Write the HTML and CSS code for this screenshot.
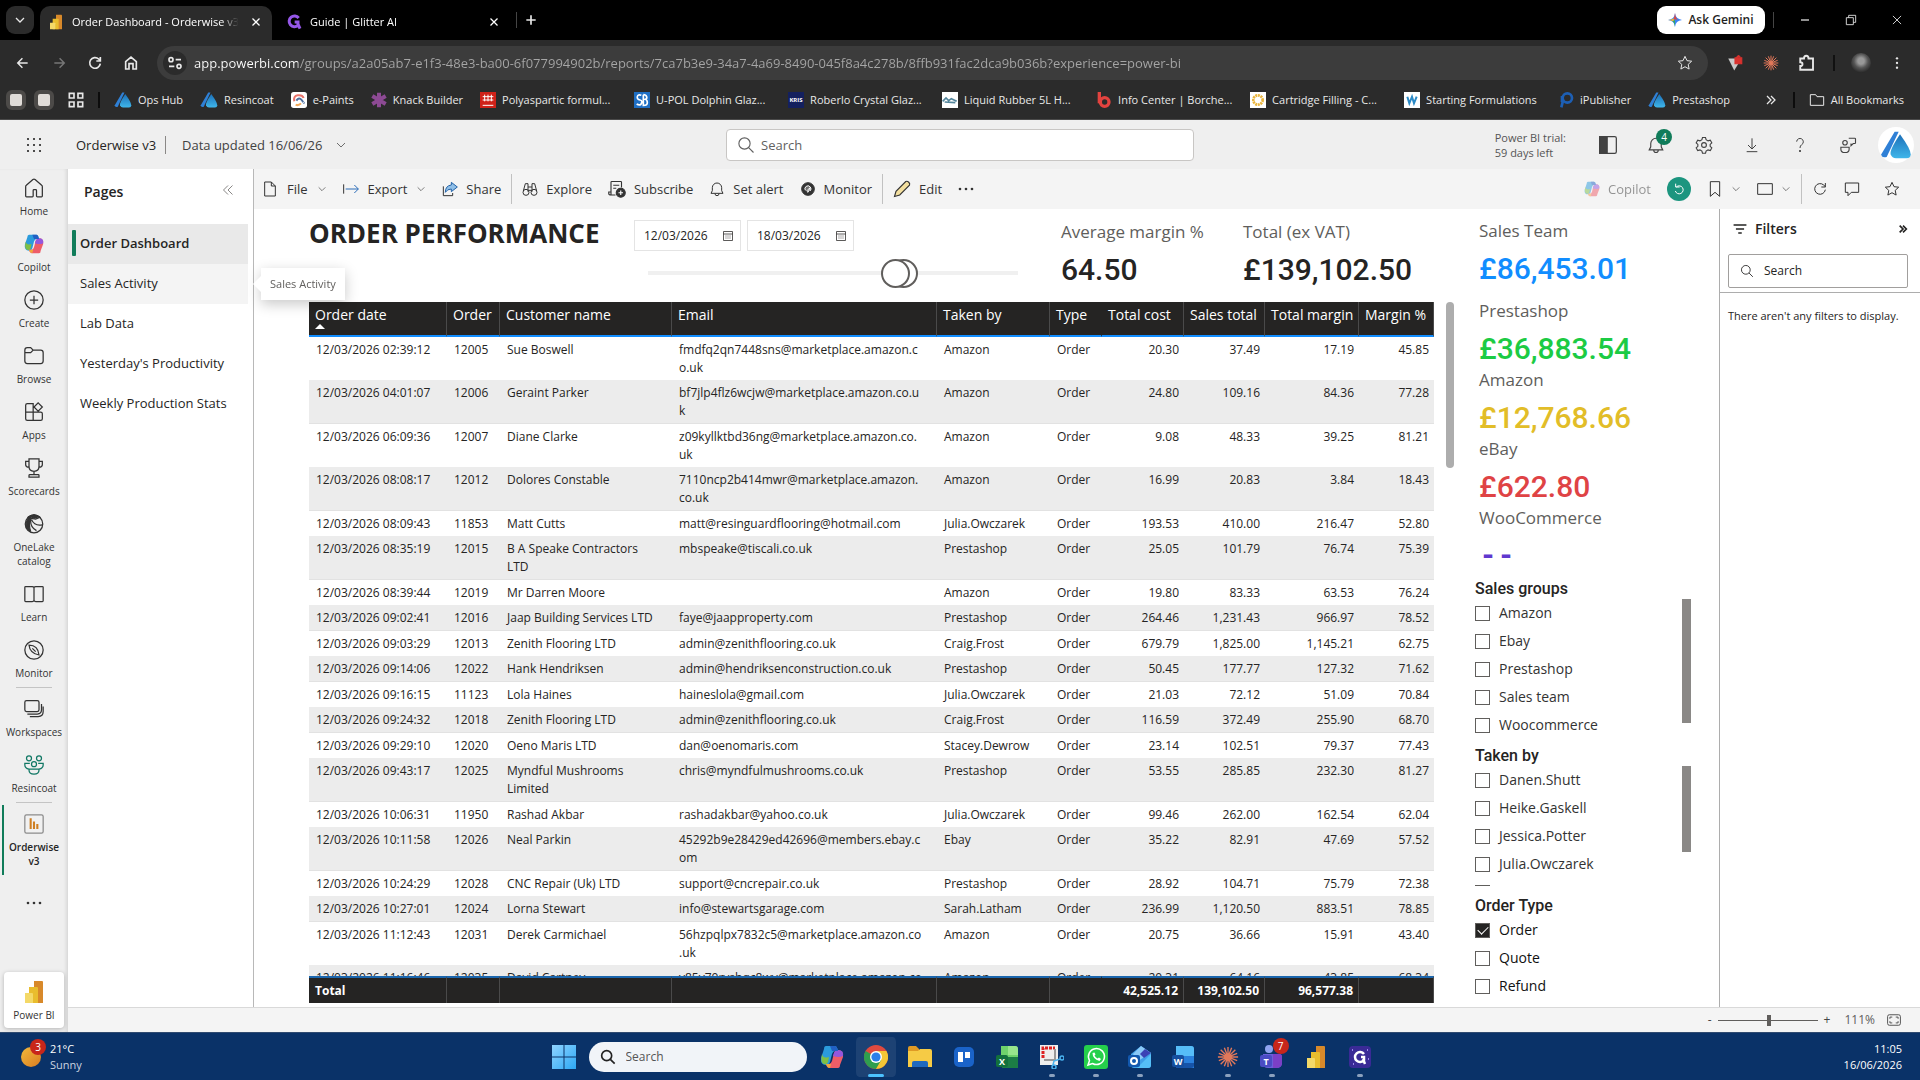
FILE: index.html
```html
<!DOCTYPE html>
<html lang="en">
<head>
<meta charset="utf-8">
<title>Order Dashboard - Orderwise v3 - Power BI</title>
<link rel="stylesheet" href="styles.css">
</head>
<body>
<svg class="sprite" aria-hidden="true">
<defs>
<linearGradient id="gDrop" x1="0" y1="0" x2="0" y2="1"><stop offset="0" stop-color="#1b6fb8"/><stop offset="1" stop-color="#3fb6ea"/></linearGradient>
<linearGradient id="gWin" x1="0" y1="0" x2="1" y2="1"><stop offset="0" stop-color="#8fd3ff"/><stop offset="1" stop-color="#2ca8f5"/></linearGradient>
<linearGradient id="gSun" x1="0" y1="0" x2="1" y2="1"><stop offset="0" stop-color="#f2b93b"/><stop offset="1" stop-color="#d97c22"/></linearGradient>
</defs>
<symbol id="chev" viewBox="0 0 24 24"><path d="M4 8l8 8 8-8"/></symbol>
<symbol id="x" viewBox="0 0 24 24"><path d="M5 5l14 14M19 5L5 19"/></symbol>
<symbol id="plus" viewBox="0 0 24 24"><path d="M12 5v14M5 12h14"/></symbol>
<symbol id="minus" viewBox="0 0 24 24"><path d="M4 12h16"/></symbol>
<symbol id="restore" viewBox="0 0 24 24"><path d="M4 8h12v12H4zM8 8V4h12v12h-4"/></symbol>
<symbol id="back" viewBox="0 0 24 24"><path d="M20 12H4M11 4l-8 8 8 8"/></symbol>
<symbol id="fwd" viewBox="0 0 24 24"><path d="M4 12h16M13 4l8 8-8 8"/></symbol>
<symbol id="reload" viewBox="0 0 24 24"><path d="M20 13a8 8 0 1 1-2.500-7l2.500 2.500M20 3v6h-6"/></symbol>
<symbol id="house" viewBox="0 0 24 24"><path d="M4 21V10l8-7 8 7v11h-5v-8H9v8z"/></symbol>
<symbol id="home" viewBox="0 0 24 24"><path d="M2 10.500a2 2 0 0 1 .8-1.700l7.900-7a2 2 0 0 1 2.600 0l7.900 7a2 2 0 0 1 .8 1.700V21.500a1 1 0 0 1-1 1h-5a1 1 0 0 1-1-1V15a1 1 0 0 0-1-1h-2a1 1 0 0 0-1 1v6.500a1 1 0 0 1-1 1H3a1 1 0 0 1-1-1z"/></symbol>
<symbol id="tune" viewBox="0 0 24 24"><circle cx="6" cy="7" r="3"/><path d="M13 7h8M3 17h8"/><circle cx="18" cy="17" r="3"/></symbol>
<symbol id="star" viewBox="0 0 24 24"><path d="M12 2l3 6.500 7 .8-5.200 4.800 1.400 7-6.200-3.500-6.200 3.500 1.400-7L2 9.300l7-.8z"/></symbol>
<symbol id="puzzle" viewBox="0 0 24 24"><path d="M3 6h5c0-5 6-5 6 0h6v5c0 2 0 4 0 5v5H3v-5c4 0 4-5 0-5z"/></symbol>
<symbol id="kebab" viewBox="0 0 24 24"><g fill="currentColor" stroke="none"><circle cx="12" cy="4" r="2"/><circle cx="12" cy="12" r="2"/><circle cx="12" cy="20" r="2"/></g></symbol>
<symbol id="dots" viewBox="0 0 24 24"><g fill="currentColor" stroke="none"><circle cx="3" cy="12" r="2"/><circle cx="12" cy="12" r="2"/><circle cx="21" cy="12" r="2"/></g></symbol>
<symbol id="burst" viewBox="0 0 24 24"><path d="M12 1v22M1 12h22M4 4l16 16M20 4L4 20M8 2l8 20M2 8l20 8M16 2L8 22M22 8L2 16" stroke="#e2785a" stroke-width="1.500"/></symbol>
<symbol id="asterisk" viewBox="0 0 24 24"><path d="M12 1v22M2 6l20 12M22 6L2 18" stroke="#8d4a94" stroke-width="6"/></symbol>
<symbol id="grid4" viewBox="0 0 24 24"><path d="M2 2h7v7H2zM15 2h7v7h-7zM2 15h7v7H2zM15 15h7v7h-7z"/></symbol>
<symbol id="folder" viewBox="0 0 24 24"><path d="M2 4h8l2 3h10v13H2z"/></symbol>
<symbol id="dbl" viewBox="0 0 24 24"><path d="M4 4l8 8-8 8M12 4l8 8-8 8"/></symbol>
<symbol id="dbll" viewBox="0 0 24 24"><path d="M12 3l-9 9 9 9M21 3l-9 9 9 9"/></symbol>
<symbol id="drop" viewBox="0 0 24 24"><path d="M1 19L11 2h3L5 21q-4 1-4-2z" fill="#2f80d6" stroke="none"/><path d="M15 4q-8 12-7 15 1 3 4 3h8q3 0 3-3 0-4-8-15z" fill="url(#gDrop)" stroke="none"/></symbol>
<symbol id="pbi" viewBox="0 0 24 24"><g stroke="none"><path d="M12 1h8q1 0 1 1v21h-9z" fill="#d8892a"/><path d="M7 7h8q1 0 1 1v15H7z" fill="#e9bd2e"/><path d="M3 13h7q1 0 1 1v9H3z" fill="#f4d968"/></g></symbol>
<symbol id="glitter" viewBox="0 0 24 24"><path d="M19 6a8 8 0 1 0-1 11l0-5h-5M18 15l3 7" stroke="#9557e8" stroke-width="4.500"/></symbol>
<symbol id="gem" viewBox="0 0 24 24"><g stroke="none"><path d="M12 0q1 10 12 12-11 1-12 12Q11 13 0 12 11 11 12 0z" fill="#3b82f6"/><path d="M12 0q1 10 5 11l-8 0Q11 9 12 0z" fill="#e2483d"/><path d="M0 12q8-1 10-3v6q-2-2-10-3z" fill="#f0b92d"/><path d="M12 24Q11 16 8 14l4-2z" fill="#2fa866"/></g></symbol>
<symbol id="epaints" viewBox="0 0 24 24"><rect width="24" height="24" rx="4" fill="#fff" stroke="none"/><path d="M5 14q-2-8 5-9t9 4" stroke="#e9736a" stroke-width="3"/><path d="M8 13q4-6 8-1t3 4" stroke="#4d6f9e" stroke-width="3"/><path d="M7 19q4 2 8-2" stroke="#f1a95a" stroke-width="3"/></symbol>
<symbol id="poly" viewBox="0 0 24 24"><path d="M0 0h24v24H0z" fill="#cf2219" stroke="none"/><path d="M7 4v10M12 4v10M17 4v10M4 7h16M4 12h16M4 20h16" stroke="#fff" stroke-width="1.500"/></symbol>
<symbol id="upol" viewBox="0 0 24 24"><path d="M0 0h24v24H0z" fill="#1f6fc4" stroke="none"/><path d="M11 5q-5-2-6 2t4 5 1 7q-3 1-6-1M14 4v16q6 0 6-4t-3-5q3-1 2-4t-5-3" stroke="#fff" stroke-width="2.500"/></symbol>
<symbol id="liquid" viewBox="0 0 24 24"><path d="M0 0h24v24H0z" fill="#fff" stroke="none"/><path d="M1 14l5-5 4 4 4-3 8 4M4 15l16 1" stroke="#54869c" stroke-width="2.500"/></symbol>
<symbol id="borch" viewBox="0 0 24 24"><path d="M5 0v17" stroke="#e2433f" stroke-width="5"/><circle cx="13" cy="15" r="6.500" stroke="#e2433f" stroke-width="5"/></symbol>
<symbol id="cart" viewBox="0 0 24 24"><path d="M0 0h24v24H0z" fill="#fff" stroke="none"/><circle cx="12" cy="12" r="7" stroke="#eab53c" stroke-width="4" stroke-dasharray="3 1"/></symbol>
<symbol id="wsq" viewBox="0 0 24 24"><path d="M0 0h24v24H0z" fill="#fff" stroke="none"/><path d="M5 7l3 10 4-10 3 10 4-10" stroke="#2b8ac6" stroke-width="3"/></symbol>
<symbol id="ipub" viewBox="0 0 24 24"><circle cx="14" cy="9" r="7" stroke="#1d5fb4" stroke-width="4"/><path d="M8 11l-3 12M6 6v9" stroke="#1d5fb4" stroke-width="4"/></symbol>
<symbol id="waffle" viewBox="0 0 24 24"><g fill="currentColor" stroke="none"><circle cx="3" cy="3" r="1.600"/><circle cx="12" cy="3" r="1.600"/><circle cx="21" cy="3" r="1.600"/><circle cx="3" cy="12" r="1.600"/><circle cx="12" cy="12" r="1.600"/><circle cx="21" cy="12" r="1.600"/><circle cx="3" cy="21" r="1.600"/><circle cx="12" cy="21" r="1.600"/><circle cx="21" cy="21" r="1.600"/></g></symbol>
<symbol id="mag" viewBox="0 0 24 24"><circle cx="10" cy="10" r="7.500"/><path d="M15.500 15.500L22 22"/></symbol>
<symbol id="panel" viewBox="0 0 24 24"><rect x="2" y="2" width="20" height="20" rx="2"/><path d="M2 2h9v20H2z" fill="currentColor"/></symbol>
<symbol id="bell" viewBox="0 0 24 24"><path d="M3 18.500l2-4V10a7 7 0 0 1 14 0v4.500l2 4zM9 19a3 3 0 0 0 6 0"/></symbol>
<symbol id="gear" viewBox="0 0 24 24"><circle cx="12" cy="12" r="3.200"/><path d="M10 2h4l.8 3 2.600 1.500 3-.9 2 3.500-2.200 2.100v2.600l2.200 2.100-2 3.500-3-.9-2.600 1.500-.8 3h-4l-.8-3-2.600-1.500-3 .9-2-3.500 2.200-2.100v-2.600L1.600 9.100l2-3.500 3 .9L9.200 5z"/></symbol>
<symbol id="down" viewBox="0 0 24 24"><path d="M12 2v16M6 12l6 6 6-6M4 22h16"/></symbol>
<symbol id="help" viewBox="0 0 24 24"><path d="M7 7a5 5 0 1 1 7.500 4.500Q12 13 12 16.500"/><circle cx="12" cy="21" r="1" fill="currentColor"/></symbol>
<symbol id="feedback" viewBox="0 0 24 24"><circle cx="8" cy="9" r="3"/><path d="M2.500 15h11v2.500q0 4.500-5.500 4.500t-5.500-4.500zM13 3h8q1 0 1 1v5q0 1-1 1h-2l-3 3v-3"/></symbol>
<symbol id="file" viewBox="0 0 24 24"><path d="M4 1.500h10l6 6v15H4zM14 1.500v6h6"/></symbol>
<symbol id="export" viewBox="0 0 24 24"><path d="M1 5v14"/><path d="M4 12h19M17 6l6 6-6 6" stroke="#2b6cb8"/></symbol>
<symbol id="share" viewBox="0 0 24 24"><path d="M2 8v14h14v-4"/><path d="M14 2l9 7-9 7v-4q-6 0-9 5 0-10 9-11z" fill="#8fbfe8" stroke="#2463a8"/></symbol>
<symbol id="binoc" viewBox="0 0 24 24"><circle cx="6" cy="17" r="4.500"/><circle cx="18" cy="17" r="4.500"/><path d="M2 15L5 4h4v12M22 15L19 4h-4v12M9 9h6M10 14h4"/></symbol>
<symbol id="subs" viewBox="0 0 24 24"><path d="M10 20H4V3q0-1 1-1h12q1 0 1 1v7M7 7h8M7 11h4M4 16H1v2q0 2 3 2"/><circle cx="17" cy="17" r="6" fill="currentColor"/><path d="M17 14v6M14 17h6" stroke="#fff"/></symbol>
<symbol id="gauge" viewBox="0 0 24 24"><circle cx="12" cy="12" r="9.500" fill="currentColor"/><path d="M8 14a4.500 4.500 0 1 1 7 1M12 17l3-7-5 5z" stroke="#fff" fill="#fff" fill-opacity=".3"/></symbol>
<symbol id="pencil" viewBox="0 0 24 24"><path d="M2 22l2-7L17 2q2-1 4 1t1 4L9 20z" fill="#f3df9f"/></symbol>
<symbol id="copilot" viewBox="0 0 24 24"><g stroke="none"><path d="M6 1h9q2 0 3 5h-3q-2 0-3 3l-2 8q-1 3-4 3-6 0-5-7L4 4q0-3 2-3z" fill="#2b9bdc"/><path d="M2 9q1 5 7 3l-1 5q-1 3-4 2-4-1-2-10z" fill="#7fbf45"/><path d="M18 23H9q-2 0-3-4h3q2 0 3-3l2-8q1-3 4-3 6 0 5 7l-3 8q0 3-2 3z" fill="#ee5d68"/><path d="M6 19h5l-1 4q-3 0-4-4z" fill="#f0a63c"/><path d="M14 8q1-3 4-3 6 0 5 6-4 2-10 0z" fill="#9457dd"/><path d="M10 1h5q2 0 3 5h-6z" fill="#2160c4"/></g></symbol>
<symbol id="reset" viewBox="0 0 24 24"><path d="M8 9a6 6 0 1 1-1.500 6M7 4v5h6"/></symbol>
<symbol id="bookmark" viewBox="0 0 24 24"><path d="M5 1h14v22l-7-6-7 6z"/></symbol>
<symbol id="view" viewBox="0 0 24 24"><path d="M1 4h22v16H1z"/></symbol>
<symbol id="comment" viewBox="0 0 24 24"><path d="M2 3h20v14H11l-5 5v-5H2z"/></symbol>
<symbol id="create" viewBox="0 0 24 24"><circle cx="12" cy="12" r="11"/><path d="M12 7v10M7 12h10"/></symbol>
<symbol id="browse" viewBox="0 0 24 24"><path d="M1 5q0-3 3-3h4l3 3h9q3 0 3 3v10q0 3-3 3H4q-3 0-3-3zM1 8h7l3-3"/></symbol>
<symbol id="apps" viewBox="0 0 24 24"><path d="M2 4q0-2 2-2h7v20H4q-2 0-2-2zM2 12h18q2 0 2 2v6q0 2-2 2h-9M17 1l5 5-5 5-5-5z"/></symbol>
<symbol id="trophy" viewBox="0 0 24 24"><path d="M6 1h12v9q0 6-6 6t-6-6zM6 4H2v4q0 3 4 3M18 4h4v4q0 3-4 3M12 16v4M6 23v-2q0-1 1-1h10q1 0 1 1v2z"/></symbol>
<symbol id="lake" viewBox="0 0 24 24"><circle cx="12" cy="12" r="10.500"/><path d="M8 3Q1 8 3 16l5 5q-3-9 0-18z" fill="currentColor"/><path d="M5 4q7-6 14 0l-5 2-7-1zM8 6q-1 10 7 14M9 7q4 8 13 6" fill="none"/><path d="M6 3q6-4 12 0l-5 2z" fill="currentColor"/></symbol>
<symbol id="learn" viewBox="0 0 24 24"><path d="M12 4q-1-1-2-1H2q-1 0-1 1v16q0 1 1 1h8q1 0 2-1 1 1 2 1h8q1 0 1-1V4q0-1-1-1h-8q-1 0-2 1v16"/></symbol>
<symbol id="compass" viewBox="0 0 24 24"><circle cx="12" cy="12" r="11"/><path d="M6 6q11 0 12 12Q7 16 6 6zM10 10l4 4"/></symbol>
<symbol id="spaces" viewBox="0 0 24 24"><rect x="1" y="2" width="17" height="13" rx="2"/><path d="M4 18h12q5 0 5-5V6M7 21h10q6 0 6-6V9"/></symbol>
<symbol id="people" viewBox="0 0 24 24"><circle cx="6" cy="4" r="3"/><circle cx="18" cy="4" r="3"/><circle cx="12" cy="11" r="3"/><path d="M6 17q-5-1-5-5v-2h6M18 17q5-1 5-5v-2h-6M6 17h12v1q0 5-6 5t-6-5z"/></symbol>
<symbol id="report" viewBox="0 0 24 24"><rect x="1" y="1" width="22" height="22" rx="2" fill="#f1f1f1" stroke="#8b8b8b"/><path d="M8 5v13M12 9v9M16 12v6" stroke="#cf7f22" stroke-width="2.500"/></symbol>
<symbol id="cal" viewBox="0 0 24 24"><path d="M3 3h18v18H3zM3 8h18M7 12h2M11 12h2M15 12h2M7 16h2M11 16h2M15 16h2"/></symbol>
<symbol id="filter" viewBox="0 0 24 24"><path d="M1 5h22M5 12h14M9 19h6"/></symbol>
<symbol id="fit" viewBox="0 0 24 24"><rect x="1" y="3" width="22" height="18" rx="3"/><path d="M5 10V7h4M15 7h4v3M19 14v3h-4M9 17H5v-3"/></symbol>
<symbol id="win" viewBox="0 0 24 24"><path d="M0 0h11.500v11.500H0zM12.500 0H24v11.500H12.500zM0 12.500h11.500V24H0zM12.500 12.500H24V24H12.500z" fill="url(#gWin)" stroke="none"/></symbol>
<symbol id="chrome" viewBox="0 0 24 24"><g stroke="none"><circle cx="12" cy="12" r="12" fill="#e04a3f"/><path d="M12 12L1.600 6A12 12 0 0 0 12 24l6-9z" fill="#2f9e4f"/><path d="M12 24A12 12 0 0 0 22.400 6H12l5.200 9z" fill="#f4c735"/><circle cx="12" cy="12" r="6" fill="#fff"/><circle cx="12" cy="12" r="4.600" fill="#2b80ea"/></g></symbol>
<symbol id="explorer" viewBox="0 0 24 24"><g stroke="none"><path d="M0 3q0-2 2-2h6l3 3v6H0z" fill="#df9a25"/><path d="M0 6h10l2-2h10q2 0 2 2v16H0z" fill="#f6cb45"/><path d="M4 22v-4q0-2 2-2h12q2 0 2 2v4z" fill="#1f69bf"/></g></symbol>
<symbol id="trello" viewBox="0 0 24 24"><g stroke="none"><rect x="2" y="2" width="20" height="20" rx="5" fill="#1a63c9"/><path d="M6 7h5v10H6zM13 7h5v6h-5z" fill="#fff"/></g></symbol>
<symbol id="excel" viewBox="0 0 24 24"><g stroke="none"><path d="M5 1h14q3 0 3 3v8H5z" fill="#6fd36b"/><path d="M8 12h14v11H6V12z" fill="#1c7d45"/><path d="M12 1h7q3 0 3 3v6H12z" fill="#98e58c"/><rect y="10" width="12" height="12" rx="2" fill="#12703c"/></g></symbol>
<symbol id="snip" viewBox="0 0 24 24"><path d="M0 0h18v20H0z" fill="#eee" stroke="none"/><path d="M3 13V3h12" stroke="#d22" stroke-width="3" stroke-dasharray="3 1"/><path d="M15 4v12M4 15h12" stroke="#9a9a9a" stroke-width="2"/><circle cx="22" cy="13" r="2" stroke="#49b2ee"/><circle cx="14" cy="22" r="2" stroke="#49b2ee"/><path d="M20 14l-6 2-1 4" stroke="#49b2ee"/></symbol>
<symbol id="wa" viewBox="0 0 24 24"><rect width="24" height="24" rx="3" fill="#25d04b" stroke="none"/><path d="M4 20l1.500-4.500a8 8 0 1 1 3 3z" stroke="#fff" stroke-width="1.500"/><path d="M8.500 8q0 6 7 8l1.500-2-2-1.500-1.500 1q-2-1-3-3l1-1-1-2z" fill="#fff" stroke="none"/></symbol>
<symbol id="outlook" viewBox="0 0 24 24"><g stroke="none"><path d="M3 9l10-8 10 7v12q0 3-3 3H6q-3 0-3-3z" fill="#3f9fe8"/><path d="M13 1l10 7-13 8-5-7z" fill="#8ac9f7"/><path d="M23 9v11q0 3-3 3H9z" fill="#55bff7"/><path d="M17 4l6 4-7 5-4-4z" fill="#3b43b5"/><rect y="10" width="12" height="12" rx="2" fill="#1258ae"/><circle cx="6" cy="16" r="3" fill="none" stroke="#fff" stroke-width="2"/></g></symbol>
<symbol id="word" viewBox="0 0 24 24"><g stroke="none"><path d="M4 1h15q3 0 3 3v19H4z" fill="#2a80dc"/><path d="M4 1h15q3 0 3 3v7H4z" fill="#56bdf8"/><path d="M4 18h18v2q0 3-3 3H4z" fill="#1653a8"/><rect y="10" width="12" height="12" rx="2" fill="#164f9f"/></g></symbol>
<symbol id="teams" viewBox="0 0 24 24"><g stroke="none"><circle cx="9" cy="4" r="4" fill="#8fa3f0"/><path d="M3 9h16q3 0 3 3v6q0 5-6 5H8q-5 0-5-5z" fill="#6a5fd8"/><path d="M13 9h6q3 0 3 3v6q0 5-6 5h-3z" fill="#7b3fc6"/><rect y="10" width="12" height="12" rx="2" fill="#4a4cc4"/></g></symbol>
<symbol id="glapp" viewBox="0 0 24 24"><rect x="1" y="1" width="22" height="22" rx="4" fill="#3a2a96" stroke="none"/><path d="M16 9a5 5 0 1 0 0 6v-3h-3M15 14l2 5" stroke="#fff" stroke-width="2.500"/><path d="M4 5h1M19 5h1M5 19h1M20 14h1" stroke="#b9a6ff"/></symbol>
</svg>

<header class="browser">
  <div class="tabs">
    <button class="tab-search" aria-label="Search tabs"><svg class="i12 bold"><use href="#chev"/></svg></button>
    <div class="tab active"><svg class="i16"><use href="#pbi"/></svg><span class="tab-title">Order Dashboard - Orderwise v3</span><button aria-label="Close tab"><svg class="i12 bold"><use href="#x"/></svg></button></div>
    <div class="tab"><svg class="i16"><use href="#glitter"/></svg><span class="tab-title">Guide | Glitter AI</span><button aria-label="Close tab"><svg class="i12 bold"><use href="#x"/></svg></button></div>
    <span class="tab-sep"></span>
    <button class="new-tab" aria-label="New tab"><svg class="i16 bold"><use href="#plus"/></svg></button>
    <button class="gemini"><svg class="i14"><use href="#gem"/></svg>Ask Gemini</button>
    <span class="tab-sep"></span>
    <div class="win-controls">
      <button aria-label="Minimise"><svg class="i12 bold"><use href="#minus"/></svg></button>
      <button aria-label="Restore"><svg class="i14"><use href="#restore"/></svg></button>
      <button aria-label="Close"><svg class="i14"><use href="#x"/></svg></button>
    </div>
  </div>
  <div class="navbar">
    <button aria-label="Back"><svg class="i14 bold"><use href="#back"/></svg></button>
    <button class="dim" aria-label="Forward"><svg class="i14 bold"><use href="#fwd"/></svg></button>
    <button aria-label="Reload"><svg class="i16 bold"><use href="#reload"/></svg></button>
    <button aria-label="Home"><svg class="i16 bold"><use href="#house"/></svg></button>
    <div class="omnibox">
      <button class="site" aria-label="Site information"><svg class="i16 bold"><use href="#tune"/></svg></button>
      <input class="url" aria-label="Address" value="app.powerbi.com/groups/a2a05ab7-e1f3-48e3-ba00-6f077994902b/reports/7ca7b3e9-34a7-4a69-8490-045f8a4c278b/8ffb931fac2dca9b036b?experience=power-bi">
      <button aria-label="Bookmark"><svg class="i16"><use href="#star"/></svg></button>
    </div>
    <button aria-label="Extension"><svg class="i18" viewBox="0 0 24 24"><path d="M3 6l8 16 6-10-4-6z" fill="#c9c9c9" stroke="none"/><path d="M12 5h9v8h-9zM14 5q2-5 5-1" fill="#d9322e" stroke="#d9322e"/></svg></button>
    <button aria-label="Extension"><svg class="i16"><use href="#burst"/></svg></button>
    <button aria-label="Extensions"><svg class="i18 bold"><use href="#puzzle"/></svg></button>
    <span class="nav-sep"></span>
    <button aria-label="Profile"><span class="face"></span></button>
    <button aria-label="Menu"><svg class="i14"><use href="#kebab"/></svg></button>
  </div>
  <nav class="bookmarks">
    <a class="sq" href="#" aria-label="Shortcut"></a><a class="sq" href="#" aria-label="Shortcut"></a>
    <a class="tabgrid" href="#" aria-label="Tab groups"><svg class="i16 bold"><use href="#grid4"/></svg></a>
    <span class="bm-sep"></span>
    <a href="#"><svg class="i18"><use href="#drop"/></svg>Ops Hub</a>
    <a href="#"><svg class="i18"><use href="#drop"/></svg>Resincoat</a>
    <a href="#"><svg class="i16"><use href="#epaints"/></svg>e-Paints</a>
    <a href="#"><svg class="i16"><use href="#asterisk"/></svg>Knack Builder</a>
    <a class="wide" href="#"><svg class="i16"><use href="#poly"/></svg>Polyaspartic formul...</a>
    <a class="wide" href="#"><svg class="i16"><use href="#upol"/></svg>U-POL Dolphin Glaz...</a>
    <a class="wide" href="#"><svg class="i16" viewBox="0 0 24 24"><path d="M0 0h24v24H0z" fill="#14205e" stroke="none"/><text x="12" y="15" font-size="9" font-weight="700" text-anchor="middle" fill="#fff" stroke="none">KRIS</text></svg>Roberlo Crystal Glaz...</a>
    <a class="wide" href="#"><svg class="i16"><use href="#liquid"/></svg>Liquid Rubber 5L H...</a>
    <a class="wide" href="#"><svg class="i16"><use href="#borch"/></svg>Info Center | Borche...</a>
    <a class="wide" href="#"><svg class="i16"><use href="#cart"/></svg>Cartridge Filling - C...</a>
    <a class="wide" href="#"><svg class="i16"><use href="#wsq"/></svg>Starting Formulations</a>
    <a href="#"><svg class="i16"><use href="#ipub"/></svg>iPublisher</a>
    <a href="#"><svg class="i18"><use href="#drop"/></svg>Prestashop</a>
    <button class="more-bm" aria-label="More bookmarks"><svg class="i12 bold"><use href="#dbl"/></svg></button>
    <span class="bm-sep"></span>
    <a href="#"><svg class="i16"><use href="#folder"/></svg>All Bookmarks</a>
  </nav>
</header>

<div class="app">
  <header class="topbar">
    <div class="top-left">
      <button class="waffle" aria-label="App launcher"><svg class="i16"><use href="#waffle"/></svg></button>
      <a class="crumb" href="#">Orderwise v3</a>
      <button class="updated">Data updated 16/06/26 <svg class="i12"><use href="#chev"/></svg></button>
    </div>
    <label class="search"><svg class="i18"><use href="#mag"/></svg><input type="text" placeholder="Search" aria-label="Search"></label>
    <div class="top-right">
      <p class="trial">Power BI trial:<br>59 days left</p>
      <button aria-label="Panel"><svg class="i20"><use href="#panel"/></svg></button>
      <button class="notif" aria-label="Notifications"><svg class="i18"><use href="#bell"/></svg><span class="badge">4</span></button>
      <button aria-label="Settings"><svg class="i18"><use href="#gear"/></svg></button>
      <button aria-label="Download"><svg class="i16"><use href="#down"/></svg></button>
      <button aria-label="Help"><svg class="i16"><use href="#help"/></svg></button>
      <button aria-label="Feedback"><svg class="i18"><use href="#feedback"/></svg></button>
      <button aria-label="Account"><span class="account"><svg class="i32"><use href="#drop"/></svg></span></button>
    </div>
  </header>

  <div class="app-body">
    <nav class="rail">
      <a href="#"><svg class="i20"><use href="#home"/></svg>Home</a>
      <a href="#"><svg class="i22"><use href="#copilot"/></svg>Copilot</a>
      <a href="#"><svg class="i20"><use href="#create"/></svg>Create</a>
      <a href="#"><svg class="i20"><use href="#browse"/></svg>Browse</a>
      <a href="#"><svg class="i20"><use href="#apps"/></svg>Apps</a>
      <a href="#"><svg class="i20"><use href="#trophy"/></svg>Scorecards</a>
      <a href="#"><svg class="i20"><use href="#lake"/></svg>OneLake<br>catalog</a>
      <a href="#"><svg class="i20"><use href="#learn"/></svg>Learn</a>
      <a href="#"><svg class="i20"><use href="#compass"/></svg>Monitor</a>
      <hr>
      <a href="#"><svg class="i20"><use href="#spaces"/></svg>Workspaces</a>
      <a href="#"><svg class="i20 teal"><use href="#people"/></svg>Resincoat</a>
      <hr>
      <a class="current" href="#"><svg class="i20"><use href="#report"/></svg>Orderwise<br>v3</a>
      <button class="rail-more" aria-label="More"><svg class="i16"><use href="#dots"/></svg></button>
      <a class="product" href="#"><svg class="i24"><use href="#pbi"/></svg>Power BI</a>
    </nav>

    <div class="content">
      <div class="panes">
        <aside class="pages">
          <div class="pages-head"><h2>Pages</h2><button aria-label="Collapse pages"><svg class="i12"><use href="#dbll"/></svg></button></div>
          <a class="page selected" href="#">Order Dashboard</a>
          <a class="page hover" href="#">Sales Activity<span class="tip">Sales Activity</span></a>
          <a class="page" href="#">Lab Data</a>
          <a class="page" href="#">Yesterday's Productivity</a>
          <a class="page" href="#">Weekly Production Stats</a>
        </aside>

        <main class="main">
          <div class="toolbar">
            <button class="t-menu"><svg class="i16"><use href="#file"/></svg>File<svg class="i10"><use href="#chev"/></svg></button>
            <button class="t-menu"><svg class="i16"><use href="#export"/></svg>Export<svg class="i10"><use href="#chev"/></svg></button>
            <button><svg class="i16"><use href="#share"/></svg>Share</button>
            <span class="tb-sep"></span>
            <button><svg class="i16"><use href="#binoc"/></svg>Explore</button>
            <button><svg class="i18"><use href="#subs"/></svg>Subscribe</button>
            <button><svg class="i16"><use href="#bell"/></svg>Set alert</button>
            <button><svg class="i16"><use href="#gauge"/></svg>Monitor</button>
            <span class="tb-sep"></span>
            <button><svg class="i18"><use href="#pencil"/></svg>Edit</button>
            <button class="t-dots" aria-label="More options"><svg class="i16"><use href="#dots"/></svg></button>
            <div class="tb-right">
              <button class="t-copilot" disabled><svg class="i16"><use href="#copilot"/></svg>Copilot</button>
              <button class="t-reset" aria-label="Reset"><svg class="i16"><use href="#reset"/></svg></button>
              <button aria-label="Bookmarks"><svg class="i16"><use href="#bookmark"/></svg><svg class="i10"><use href="#chev"/></svg></button>
              <button aria-label="View"><svg class="i16"><use href="#view"/></svg><svg class="i10"><use href="#chev"/></svg></button>
              <span class="tb-sep"></span>
              <button aria-label="Refresh"><svg class="i16"><use href="#reload"/></svg></button>
              <button aria-label="Comment"><svg class="i16"><use href="#comment"/></svg></button>
              <button class="t-star" aria-label="Favourite"><svg class="i16"><use href="#star"/></svg></button>
            </div>
          </div>

          <div class="stage">
            <section class="report">
              <div class="report-left">
                <div class="report-head">
                  <h1>ORDER PERFORMANCE</h1>
                  <div class="dates">
                    <div class="date-row">
                      <label class="date"><input type="text" value="12/03/2026" aria-label="Start date"><svg class="i12"><use href="#cal"/></svg></label>
                      <label class="date"><input type="text" value="18/03/2026" aria-label="End date"><svg class="i12"><use href="#cal"/></svg></label>
                    </div>
                    <div class="range"><input type="range" min="0" max="1000" value="706" aria-label="Range end"><input type="range" min="0" max="1000" value="683" aria-label="Range start"></div>
                  </div>
                  <div class="stat stat-margin"><span>Average margin %</span><strong>64.50</strong></div>
                  <div class="stat"><span>Total (ex VAT)</span><strong>£139,102.50</strong></div>
                </div>
                <div class="grid-wrap">
                  <div class="grid-scroll">
                    <table>
                      <colgroup><col class="c1"><col class="c2"><col class="c3"><col class="c4"><col class="c5"><col class="c6"><col class="c7"><col class="c8"><col class="c9"><col class="c10"></colgroup>
                      <thead><tr><th>Order date<i class="sort"></i></th><th>Order</th><th>Customer name</th><th>Email</th><th>Taken by</th><th class="open">Type</th><th>Total cost</th><th>Sales total</th><th>Total margin</th><th>Margin %</th></tr></thead>
                      <tbody>
                      <tr><td>12/03/2026 02:39:12<td>12005<td>Sue Boswell<td>fmdfq2qn7448sns@marketplace.amazon.c<br>o.uk<td>Amazon<td>Order<td>20.30<td>37.49<td>17.19<td>45.85</tr>
                      <tr><td>12/03/2026 04:01:07<td>12006<td>Geraint Parker<td>bf7jlp4flz6wcjw@marketplace.amazon.co.u<br>k<td>Amazon<td>Order<td>24.80<td>109.16<td>84.36<td>77.28</tr>
                      <tr><td>12/03/2026 06:09:36<td>12007<td>Diane Clarke<td>z09kyllktbd36ng@marketplace.amazon.co.<br>uk<td>Amazon<td>Order<td>9.08<td>48.33<td>39.25<td>81.21</tr>
                      <tr><td>12/03/2026 08:08:17<td>12012<td>Dolores Constable<td>7110ncp2b414mwr@marketplace.amazon.<br>co.uk<td>Amazon<td>Order<td>16.99<td>20.83<td>3.84<td>18.43</tr>
                      <tr><td>12/03/2026 08:09:43<td>11853<td>Matt Cutts<td>matt@resinguardflooring@hotmail.com<td>Julia.Owczarek<td>Order<td>193.53<td>410.00<td>216.47<td>52.80</tr>
                      <tr><td>12/03/2026 08:35:19<td>12015<td>B A Speake Contractors<br>LTD<td>mbspeake@tiscali.co.uk<td>Prestashop<td>Order<td>25.05<td>101.79<td>76.74<td>75.39</tr>
                      <tr><td>12/03/2026 08:39:44<td>12019<td>Mr Darren Moore<td><td>Amazon<td>Order<td>19.80<td>83.33<td>63.53<td>76.24</tr>
                      <tr><td>12/03/2026 09:02:41<td>12016<td>Jaap Building Services LTD<td>faye@jaapproperty.com<td>Prestashop<td>Order<td>264.46<td>1,231.43<td>966.97<td>78.52</tr>
                      <tr><td>12/03/2026 09:03:29<td>12013<td>Zenith Flooring LTD<td>admin@zenithflooring.co.uk<td>Craig.Frost<td>Order<td>679.79<td>1,825.00<td>1,145.21<td>62.75</tr>
                      <tr><td>12/03/2026 09:14:06<td>12022<td>Hank Hendriksen<td>admin@hendriksenconstruction.co.uk<td>Prestashop<td>Order<td>50.45<td>177.77<td>127.32<td>71.62</tr>
                      <tr><td>12/03/2026 09:16:15<td>11123<td>Lola Haines<td>haineslola@gmail.com<td>Julia.Owczarek<td>Order<td>21.03<td>72.12<td>51.09<td>70.84</tr>
                      <tr><td>12/03/2026 09:24:32<td>12018<td>Zenith Flooring LTD<td>admin@zenithflooring.co.uk<td>Craig.Frost<td>Order<td>116.59<td>372.49<td>255.90<td>68.70</tr>
                      <tr><td>12/03/2026 09:29:10<td>12020<td>Oeno Maris LTD<td>dan@oenomaris.com<td>Stacey.Dewrow<td>Order<td>23.14<td>102.51<td>79.37<td>77.43</tr>
                      <tr><td>12/03/2026 09:43:17<td>12025<td>Myndful Mushrooms<br>Limited<td>chris@myndfulmushrooms.co.uk<td>Prestashop<td>Order<td>53.55<td>285.85<td>232.30<td>81.27</tr>
                      <tr><td>12/03/2026 10:06:31<td>11950<td>Rashad Akbar<td>rashadakbar@yahoo.co.uk<td>Julia.Owczarek<td>Order<td>99.46<td>262.00<td>162.54<td>62.04</tr>
                      <tr><td>12/03/2026 10:11:58<td>12026<td>Neal Parkin<td>45292b9e28429ed42696@members.ebay.c<br>om<td>Ebay<td>Order<td>35.22<td>82.91<td>47.69<td>57.52</tr>
                      <tr><td>12/03/2026 10:24:29<td>12028<td>CNC Repair (Uk) LTD<td>support@cncrepair.co.uk<td>Prestashop<td>Order<td>28.92<td>104.71<td>75.79<td>72.38</tr>
                      <tr><td>12/03/2026 10:27:01<td>12024<td>Lorna Stewart<td>info@stewartsgarage.com<td>Sarah.Latham<td>Order<td>236.99<td>1,120.50<td>883.51<td>78.85</tr>
                      <tr><td>12/03/2026 11:12:43<td>12031<td>Derek Carmichael<td>56hzpqlpx7832c5@marketplace.amazon.co<br>.uk<td>Amazon<td>Order<td>20.75<td>36.66<td>15.91<td>43.40</tr>
                      <tr><td>12/03/2026 11:16:46<td>12035<td>David Cartney<td>v85y70rvshqc8wv@marketplace.amazon.co.<br>uk<td>Amazon<td>Order<td>20.31<td>64.16<td>43.85<td>68.34</tr>
                      </tbody>
                      <tfoot><tr><td>Total<td><td><td><td><td class="open"><td>42,525.12<td>139,102.50<td>96,577.38<td></tr></tfoot>
                    </table>
                  </div>
                  <span class="grid-bar"></span>
                </div>
              </div>

              <div class="report-right">
                <div class="kpis">
                  <div class="kpi first"><span>Sales Team</span><strong class="blue">£86,453.01</strong></div>
                  <div class="kpi"><span>Prestashop</span><strong class="green">£36,883.54</strong></div>
                  <div class="kpi"><span>Amazon</span><strong class="gold">£12,768.66</strong></div>
                  <div class="kpi"><span>eBay</span><strong class="red">£622.80</strong></div>
                  <div class="kpi"><span>WooCommerce</span><strong class="violet">--</strong></div>
                </div>
                <fieldset class="slicer groups">
                  <legend>Sales groups</legend>
                  <div class="options">
                    <div class="list">
                      <label><input type="checkbox">Amazon</label><label><input type="checkbox">Ebay</label><label><input type="checkbox">Prestashop</label><label><input type="checkbox">Sales team</label><label><input type="checkbox">Woocommerce</label>
                    </div>
                    <span class="bar bar-long"></span>
                  </div>
                </fieldset>
                <fieldset class="slicer takenby">
                  <legend>Taken by</legend>
                  <div class="options clipped">
                    <div class="list">
                      <label><input type="checkbox">Danen.Shutt</label><label><input type="checkbox">Heike.Gaskell</label><label><input type="checkbox">Jessica.Potter</label><label><input type="checkbox">Julia.Owczarek</label><label><input type="checkbox" aria-label="More"></label>
                    </div>
                    <span class="bar bar-short"></span>
                  </div>
                </fieldset>
                <fieldset class="slicer ordertype">
                  <legend>Order Type</legend>
                  <div class="options">
                    <div class="list dark">
                      <label><input type="checkbox" checked>Order</label><label><input type="checkbox">Quote</label><label><input type="checkbox">Refund</label>
                    </div>
                  </div>
                </fieldset>
              </div>
            </section>

            <aside class="filters">
              <div class="filters-top">
                <div class="filters-head"><svg class="i14 bold"><use href="#filter"/></svg><h2>Filters</h2><button aria-label="Collapse filters"><svg class="i10 heavy"><use href="#dbl"/></svg></button></div>
                <label class="filter-search"><svg class="i14"><use href="#mag"/></svg><input type="text" placeholder="Search" aria-label="Search filters"></label>
              </div>
              <p>There aren't any filters to display.</p>
            </aside>
          </div>
        </main>
      </div>
      <footer class="status">
        <button aria-label="Zoom out">-</button>
        <input type="range" min="10" max="210" value="113" aria-label="Zoom">
        <button aria-label="Zoom in">+</button>
        <span>111%</span>
        <button aria-label="Fit to page"><svg class="i14"><use href="#fit"/></svg></button>
      </footer>
    </div>
  </div>
</div>

<footer class="taskbar">
  <button class="weather"><span class="sun"><svg class="i20" viewBox="0 0 24 24"><circle cx="12" cy="12" r="12" fill="url(#gSun)" stroke="none"/></svg><span class="count">3</span></span><span class="w-text">21°C<br><span>Sunny</span></span></button>
  <div class="dock">
    <button class="start" aria-label="Start"><svg class="i24"><use href="#win"/></svg></button>
    <label class="dock-search"><svg class="i16 bold"><use href="#mag"/></svg><input type="text" placeholder="Search" aria-label="Search Windows"></label>
    <button aria-label="Copilot"><svg class="i24"><use href="#copilot"/></svg></button>
    <button class="focus" aria-label="Chrome"><svg class="i24"><use href="#chrome"/></svg></button>
    <button aria-label="File Explorer"><svg class="i24"><use href="#explorer"/></svg></button>
    <button aria-label="Trello"><svg class="i24"><use href="#trello"/></svg></button>
    <button aria-label="Excel"><svg class="i24 letter" viewBox="0 0 24 24"><use href="#excel"/><text x="6" y="20">X</text></svg></button>
    <button class="open" aria-label="Snipping Tool"><svg class="i24"><use href="#snip"/></svg></button>
    <button class="open" aria-label="WhatsApp"><svg class="i24"><use href="#wa"/></svg></button>
    <button class="open" aria-label="Outlook"><svg class="i24"><use href="#outlook"/></svg></button>
    <button aria-label="Word"><svg class="i24 letter" viewBox="0 0 24 24"><use href="#word"/><text x="6" y="20">W</text></svg></button>
    <button class="open" aria-label="Claude"><svg class="i22"><use href="#burst"/></svg></button>
    <button class="open" aria-label="Teams"><svg class="i24 letter" viewBox="0 0 24 24"><use href="#teams"/><text x="6" y="20">T</text></svg><span class="count">7</span></button>
    <button aria-label="Power BI"><svg class="i24"><use href="#pbi"/></svg></button>
    <button class="open" aria-label="Glitter"><svg class="i24"><use href="#glapp"/></svg></button>
  </div>
  <div class="clock">11:05<br>16/06/2026</div>
</footer>
</body>
</html>
```
FILE: styles.css
```css
* { box-sizing: border-box; }
body {
  margin: 0;
  height: 100vh;
  display: flex;
  flex-direction: column;
  overflow: hidden;
  font-family: "Open Sans", "Noto Sans", sans-serif;
  font-size: 13px;
  line-height: 18px;
  color: #252423;
  background: #fff;
}
button, input { font: inherit; color: inherit; }
button { border: 0; padding: 0; background: none; display: flex; align-items: center; justify-content: center; white-space: nowrap; }
input { min-width: 0; }
a { color: inherit; text-decoration: none; }
h1, h2, p { margin: 0; }
svg { flex: none; display: block; fill: none; stroke: currentColor; stroke-width: 1.5; overflow: visible; }
.sprite { position: absolute; width: 0; height: 0; }
.bold { stroke-width: 2.5; }
.heavy { stroke-width: 4; }
.i10 { width: 10px; height: 10px; }
.i12 { width: 12px; height: 12px; }
.i14 { width: 14px; height: 14px; }
.i16 { width: 16px; height: 16px; }
.i18 { width: 18px; height: 18px; }
.i20 { width: 20px; height: 20px; }
.i22 { width: 22px; height: 22px; }
.i24 { width: 24px; height: 24px; }
.i32 { width: 32px; height: 32px; }
.letter text { font-size: 9px; font-weight: 700; text-anchor: middle; fill: #fff; stroke: none; }

/* Browser chrome */
.browser { flex: none; background: #2b2b2b; color: #e8e8e8; font-size: 11px; border-bottom: 1px solid #4a4a4a; }
.tabs { display: flex; align-items: center; height: 40px; padding-left: 6px; background: #000; }
.tab-search { width: 28px; height: 28px; border-radius: 9px; background: #2b2b2b; margin-right: 6px; }
.tab { display: flex; align-items: center; width: 232px; height: 34px; margin-top: 6px; padding: 0 10px 2px 8px; gap: 8px; margin-right: 6px; color: #fff; }
.tab.active { background: #2b2b2b; border-radius: 10px 10px 0 0; }
.tab-title { flex: 1; overflow: hidden; white-space: nowrap; -webkit-mask-image: linear-gradient(90deg, #000 88%, transparent 98%); mask-image: linear-gradient(90deg, #000 88%, transparent 98%); }
.tab-sep { width: 1px; height: 16px; background: #454545; }
.new-tab { width: 28px; }
.gemini { margin: 0 8px 0 auto; width: 108px; height: 28px; gap: 6px; border-radius: 9px; background: #fff; color: #1f1f1f; font-size: 12px; font-weight: 600; }
.win-controls { display: flex; padding-left: 8px; }
.win-controls button { width: 46px; }
.navbar { display: flex; align-items: center; height: 46px; padding: 0 5px; }
.navbar > button { width: 36px; }
.dim { color: #777; }
.omnibox { flex: 1; display: flex; align-items: center; height: 34px; margin: 0 9px 0 8px; padding: 0 15px 0 6px; border-radius: 17px; background: #3c3c3c; }
.site { width: 24px; height: 24px; border-radius: 12px; background: #2b2b2b; }
.url { flex: 1; margin: 0 7px; padding: 0; border: 0; font-size: 13px; background: linear-gradient(90deg, #fff 104px, #a6a6a6 104px); -webkit-background-clip: text; background-clip: text; color: transparent; }
.nav-sep { width: 2px; height: 16px; margin: 0 8px; background: #111; }
.face { width: 20px; height: 20px; border-radius: 10px; background: radial-gradient(circle at 50% 40%, #999 0 20%, #555 45%, #222 80%); }
.bookmarks { display: flex; align-items: center; height: 33px; padding: 0 16px 5px 6px; gap: 17px; white-space: nowrap; }
.bookmarks a { display: flex; align-items: center; gap: 6px; }
.bookmarks .sq { width: 20px; height: 20px; margin-right: -9px; border: 4px solid #4c4a48; border-radius: 6px; background: #e0dcd8; }
.tabgrid { margin-left: 6px; }
.bm-sep { width: 2px; height: 16px; margin: 0 -3px; background: #0c0c0c; }
.bookmarks .wide { width: 137px; }
.more-bm { margin-left: auto; width: 16px; }

/* App shell */
.app { flex: 1; min-height: 0; display: flex; flex-direction: column; background: #efefef; }
.topbar { flex: none; display: grid; grid-template-columns: 1fr 468px 1fr; align-items: center; height: 49px; font-size: 13px; }
.top-left { display: flex; align-items: center; }
.waffle { width: 68px; }
.crumb { padding: 0 8px; border-right: 1px solid #8a8886; width: 98px; }
.updated { padding-left: 16px; gap: 13px; color: #424242; }
.search { display: flex; align-items: center; gap: 6px; height: 32px; padding: 0 10px; border: 1px solid #c8c6c4; border-radius: 4px; background: #fff; color: #616161; }
.search input, .filter-search input, .dock-search input { flex: 1; border: 0; padding: 0; outline: 0; background: none; }
::placeholder { color: inherit; opacity: 1; }
.top-right { display: flex; justify-content: flex-end; align-items: center; color: #424242; }
.top-right button { width: 48px; height: 48px; }
.trial { font-size: 11px; line-height: 15px; margin-right: 18px; color: #555; }
.notif { position: relative; }
.badge, .count { position: absolute; display: flex; align-items: center; justify-content: center; border-radius: 50%; color: #fff; }
.badge { top: 8px; right: 8px; width: 16px; height: 16px; font-size: 10px; background: #107c5a; }
.account { display: flex; align-items: center; justify-content: center; width: 36px; height: 36px; border-radius: 18px; background: #fff; }
.app-body { flex: 1; min-height: 0; display: flex; }

/* Left rail */
.rail { flex: none; width: 68px; display: flex; flex-direction: column; font-size: 10px; line-height: 14px; text-align: center; box-shadow: inset -3px 0 4px -2px rgba(0,0,0,.14); color: #333; }
.rail a { display: flex; flex-direction: column; align-items: center; gap: 6px; padding: 9px 0 7px; }
.rail a svg { height: 20px; }
.rail hr { width: 36px; margin: 0 16px 2px; border: 0; border-top: 1px solid #c4c4c4; }
.teal { color: #117865; }
.rail .current { margin-left: 2px; padding-right: 4px; border-left: 2px solid #107c5a; font-weight: 600; color: #242424; }
.rail-more { height: 40px; margin-top: 8px; }
.rail .product { margin: auto 4px 4px; padding: 8px 0 6px; gap: 4px; border-radius: 4px; background: #fff; box-shadow: 0 1px 4px rgba(0,0,0,.25); }
.rail .product svg { height: 24px; }

/* Pages pane */
.content { flex: 1; min-width: 0; display: flex; flex-direction: column; }
.panes { flex: 1; min-height: 0; display: flex; background: #fff; border-bottom: 1px solid #d9d9d9; }
.pages { flex: none; width: 186px; padding-right: 5px; border-right: 1px solid #b8b8b8; }
.pages-head { display: flex; justify-content: space-between; align-items: center; height: 55px; padding: 0 14px 14px 16px; color: #605e5c; }
.pages-head h2 { padding-top: 4px; font-size: 14px; font-weight: 600; color: #242424; }
.page { position: relative; display: flex; align-items: center; height: 40px; padding: 0 0 2px 12px; }
.page.selected { padding-left: 4px; background: #e9e9e9; font-weight: 600; }
.page.selected::before { content: ""; width: 4px; height: 26px; margin-right: 4px; border-radius: 1px; background: #107c5a; }
.page.hover { background: #f4f4f4; }
.tip { position: absolute; z-index: 5; left: 193px; top: 4px; padding: 8px 9px; line-height: 16px; font-size: 11px; background: #fff; color: #605e5c; box-shadow: 0 4px 14px rgba(0,0,0,.22); white-space: nowrap; }
.tip::before { content: ""; position: absolute; left: -8px; top: 8px; border: 8px solid transparent; border-left: 0; border-right-color: #fff; }

/* Report toolbar */
.main { flex: 1; min-width: 0; display: flex; flex-direction: column; }
.toolbar { flex: none; display: flex; align-items: center; gap: 16px; height: 40px; padding: 0 20px 0 8px; background: #f4f4f4; color: #333; }
.toolbar button { gap: 8px; }
.toolbar .t-menu { gap: 9px; }
.tb-sep { width: 1px; height: 30px; background: #c1c1c1; margin: 0 -6px; }
.tb-right { display: flex; align-items: center; gap: 16px; margin-left: auto; }
.t-copilot { opacity: .5; }
.t-star { margin-left: 8px; }
.toolbar .t-reset { width: 24px; height: 24px; border-radius: 12px; background: #1c957f; color: #fff; }

/* Report canvas */
.stage { flex: 1; min-height: 0; display: flex; }
.report { flex: 1; min-width: 0; display: flex; padding-left: 55px; }
.report-left { flex: 1; min-width: 0; display: flex; flex-direction: column; padding-bottom: 4px; }
.report-head { flex: none; display: flex; height: 93px; }
.report-head h1 { width: 325px; padding-top: 7px; font-size: 26px; line-height: 34px; font-weight: 700; white-space: nowrap; }
.dates { width: 427px; padding-top: 11px; }
.date-row { display: flex; gap: 6px; }
.date { display: flex; align-items: center; width: 107px; height: 31px; padding: 0 6px 0 9px; border: 1px solid #e4e4e4; font-size: 12px; }
.date input { flex: 1; border: 0; padding: 0; background: none; }
.range { display: grid; align-items: center; width: 370px; margin: 7px 0 0 14px; height: 30px; background: linear-gradient(#f0f0f0, #f0f0f0) center / 100% 4px no-repeat; }
.range input { grid-area: 1 / 1; width: 100%; margin: 0; appearance: none; background: none; pointer-events: none; }
.range input::-webkit-slider-thumb { appearance: none; width: 29px; height: 29px; border: 2px solid #605e5c; border-radius: 50%; background: #fff; pointer-events: auto; }
.stat, .kpi { display: flex; flex-direction: column; white-space: nowrap; }
.stat { padding-top: 11px; }
.stat-margin { width: 182px; }
.stat span, .kpi span { font-size: 17px; line-height: 24px; color: #605e5c; }
.stat strong, .kpi strong { font-family: Roboto, sans-serif; font-size: 30px; line-height: 32px; font-weight: 500; margin-top: 10px; }
.kpis { padding: 10px 0 0 4px; }
.kpi { margin-bottom: 3px; }
.kpi.first { margin-bottom: 14px; }
.blue { color: #118dff; }
.green { color: #1ccb44; }
.gold { color: #e2bd28; }
.red { color: #df4345; }
.kpi .violet { color: #6038cf; font-family: "Liberation Mono", monospace; font-weight: 700; }

/* Orders table */
.grid-wrap { flex: 1; min-height: 0; display: flex; gap: 12px; }
.grid-scroll { flex: 1; min-width: 0; overflow: hidden; }
.grid-bar { width: 8px; height: 166px; margin-right: 21px; border-radius: 4px; background: #adadad; }
table { width: 100%; table-layout: fixed; border-collapse: separate; border-spacing: 0; font-size: 12px; }
.c1 { width: 138px; } .c2 { width: 53px; } .c3 { width: 172px; } .c4 { width: 265px; } .c5 { width: 113px; }
.c6 { width: 52px; } .c7 { width: 82px; } .c8 { width: 81px; } .c9 { width: 94px; } .c10 { width: 75px; }
th, td { padding: 0 0 0 7px; text-align: left; vertical-align: top; white-space: nowrap; }
th { position: sticky; top: 0; height: 35px; padding: 4px 0 0 6px; font-size: 14px; font-weight: 400; background: #252423; color: #fff; border-bottom: 2px solid #118dff; border-right: 1px solid #4a4a4a; }
tfoot td:first-child { padding-left: 6px; }
th.open, tfoot .open { border-right-color: #252423; }
.sort { display: block; width: 0; border: 5px solid transparent; border-top: 0; border-bottom-color: #fff; }
tbody td { padding-top: 4px; padding-bottom: 3px; }
tbody tr:nth-child(even) td { background: #ececec; border-bottom: 1px solid #e2e2e2; }
td:nth-child(n+7) { padding: 4px 5px 3px 0; text-align: right; }
tfoot td { position: sticky; bottom: 0; height: 27px; padding-top: 4px; font-weight: 700; background: #252423; color: #fff; border-top: 2px solid #1b66ad; border-right: 1px solid #4a4a4a; }

/* Slicers */
.report-right { flex: none; width: 244px; }
.slicer { margin: 0; padding: 0; border: 0; min-width: 0; }
.slicer legend { padding: 0; font-family: Roboto, sans-serif; font-size: 16px; line-height: 21px; font-weight: 500; }
.options { display: flex; justify-content: space-between; padding-right: 28px; }
.groups { margin-top: 6px; }
.takenby { margin-top: 6px; }
.ordertype { margin-top: 9px; }
.options.clipped { height: 120px; overflow: hidden; }
.list label { display: flex; align-items: center; gap: 9px; height: 28px; font-size: 14px; color: #333; }
.list.dark label { color: #111; }
.list input { appearance: none; width: 15px; height: 15px; margin: 0; border: 1px solid #605e5c; background: #fff; }
.list input:checked { display: grid; place-items: center; background: #252423; }
.list input:checked::after { content: ""; width: 9px; height: 5px; margin-top: -2px; border: solid #fff; border-width: 0 0 1px 1px; rotate: -45deg; }
.bar { width: 9px; background: #8a8886; }
.bar-long { height: 124px; }
.bar-short { height: 86px; }

/* Filters pane */
.filters { flex: none; width: 201px; border-left: 1px solid #adadad; font-size: 12px; }
.filters-top { height: 84px; padding: 0 12px 0 8px; border-bottom: 1px solid #adadad; }
.filters-head { display: flex; align-items: center; gap: 8px; height: 45px; padding: 0 0 6px 5px; }
.filters-head h2 { flex: 1; font-size: 14px; font-weight: 600; }
.filter-search { display: flex; align-items: center; gap: 10px; height: 34px; padding: 0 11px; border: 1px solid #a19f9d; border-radius: 2px; }
.filters p { padding: 14px 0 0 8px; font-size: 11px; white-space: nowrap; }

/* Status bar */
.status { flex: none; display: flex; align-items: center; justify-content: flex-end; gap: 6px; height: 24px; padding-right: 19px; background: #f4f4f4; color: #444; font-size: 12px; }
.status input { width: 100px; height: 12px; margin: 0; appearance: none; background: linear-gradient(#605e5c, #605e5c) center / 100% 1px no-repeat; }
.status input::-webkit-slider-thumb { appearance: none; width: 4px; height: 11px; background: #605e5c; }
.status span { margin: 0 6px 0 8px; color: #605e5c; }

/* Taskbar */
.taskbar { flex: none; display: grid; grid-template-columns: 1fr auto 1fr; align-items: center; height: 48px; background: #0a3268; border-top: 1px solid #2f4a70; color: #fff; font-size: 11px; line-height: 16px; }
.weather { justify-self: start; gap: 9px; padding-left: 21px; text-align: left; }
.w-text span { color: #ccd4e0; }
.sun { position: relative; }
.count { width: 16px; height: 16px; font-size: 10px; background: #c8261a; top: -8px; right: -5px; }
.dock { display: flex; align-items: center; }
.dock button { position: relative; width: 44px; height: 40px; border-radius: 5px; }
.dock .start { width: 50px; }
.dock .count { top: 1px; right: 5px; }
.dock-search { display: flex; align-items: center; gap: 10px; width: 218px; height: 30px; margin-right: 3px; padding: 0 11px; border-radius: 15px; background: #f1f4f8; color: #555; font-size: 12px; }
.dock-search svg { color: #222; }
.dock .open::after, .dock .focus::after { content: ""; position: absolute; bottom: 0; width: 6px; height: 3px; border-radius: 2px; background: #8ba0bd; }
.dock .focus { background: #1d4274; background-clip: padding-box; border: solid transparent; border-width: 0 2px; }
.dock .focus::after { width: 16px; background: #4cc2ff; }
.clock { justify-self: end; padding-right: 18px; text-align: right; }
```
